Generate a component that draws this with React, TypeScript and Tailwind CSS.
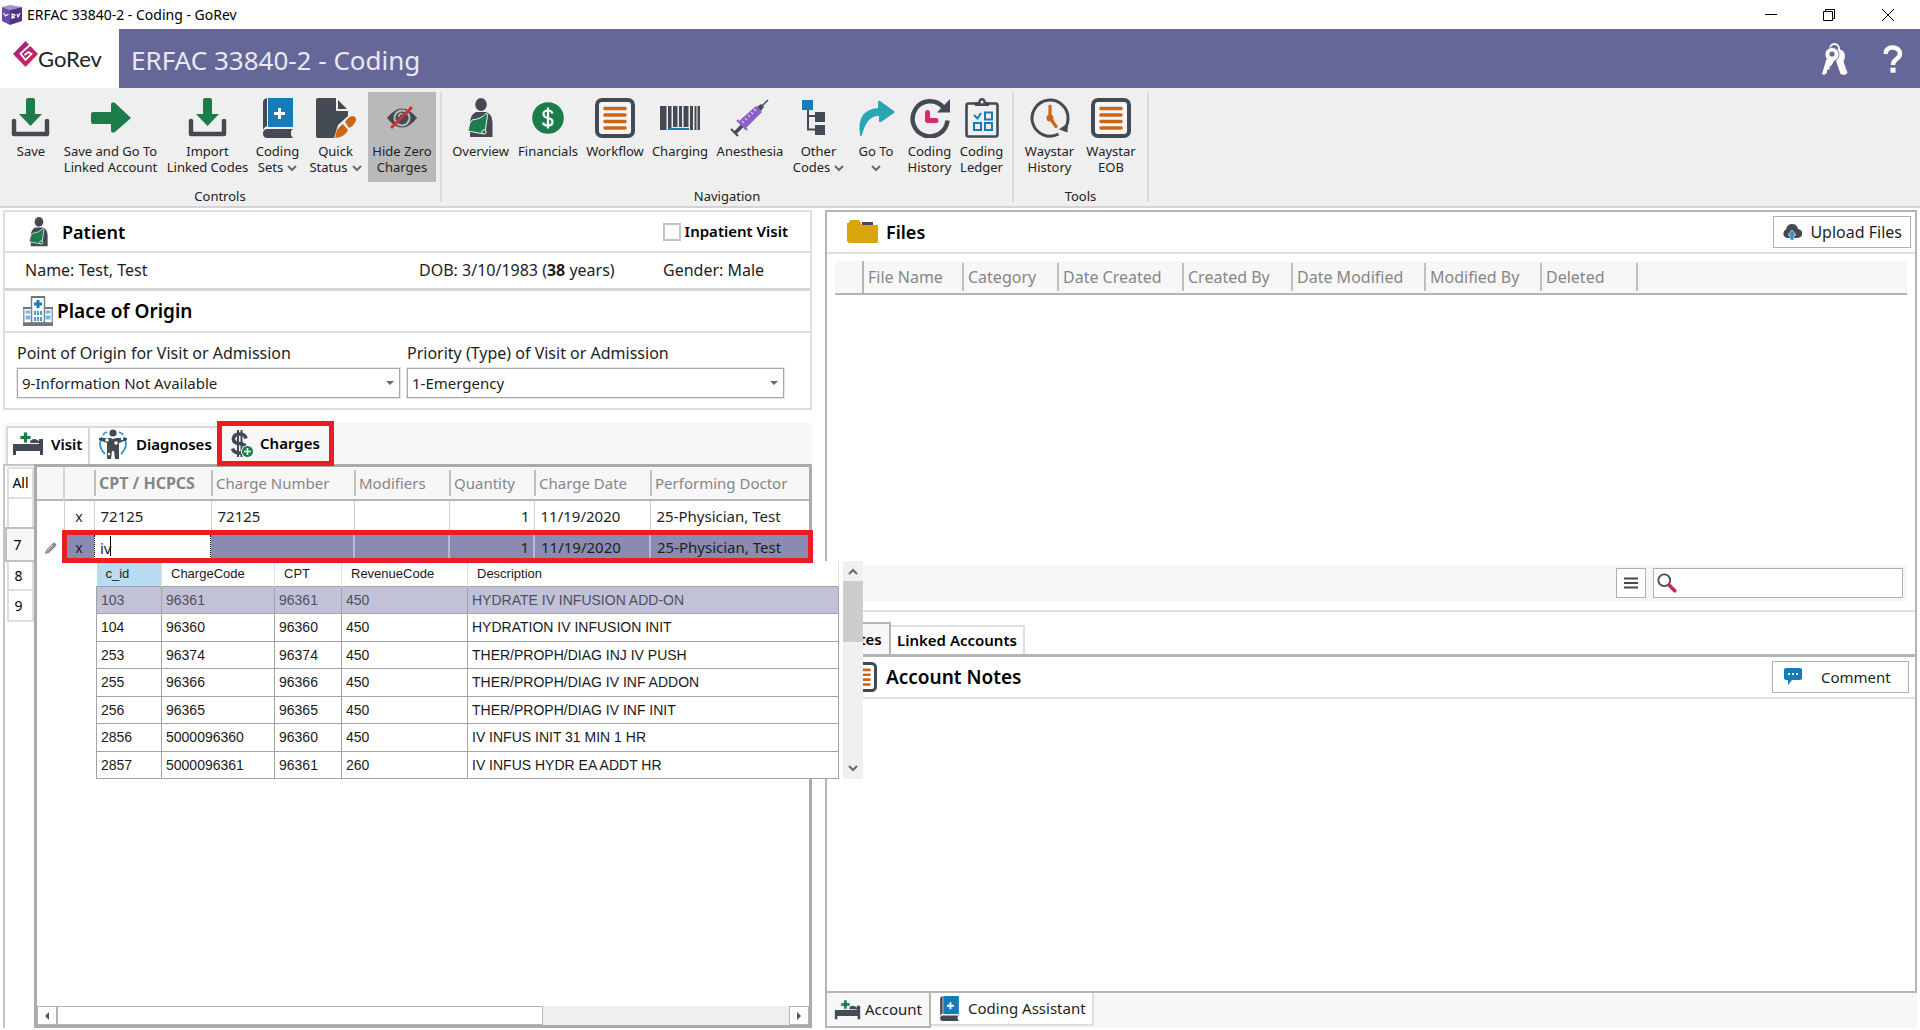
import type { ReactNode } from "react";
import clsx from "clsx";

const DARK = "#434a54";
const GREEN = "#1d7d4a";
const BLUE = "#167cb8";
const ORANGE = "#c9661a";

function DownloadIcon() {
  return (
    <svg viewBox="0 0 40 40" className="h-10 w-10" aria-hidden="true">
      <path d="M15 2a2 2 0 0 1 2-2h5a2 2 0 0 1 2 2v14h7L19.5 28 8 16h7z" fill={GREEN} />
      <path d="M3 23v13h33V23" fill="none" stroke={DARK} strokeWidth="4.5" strokeLinejoin="round" strokeLinecap="round" />
    </svg>
  );
}

function ArrowRightIcon() {
  return (
    <svg viewBox="0 0 40 40" className="h-10 w-10" aria-hidden="true">
      <path d="M2 14h18V6q1-3 4-1l16 15-16 14q-3 2-4-1v-7H2q-2 0-2-2v-8q0-2 2-2z" fill={GREEN} />
    </svg>
  );
}

function BookIcon({ className }: { className: string }) {
  return (
    <svg viewBox="0 0 40 40" className={className} aria-hidden="true">
      <path d="M9 0v28q-3 1-4 4V4q0-3 4-4z" fill={DARK} />
      <path d="M10 0h25v29H10z" fill={BLUE} />
      <path d="M20 10h3v4h4v3h-4v4h-3v-4h-4v-3h4z" fill="#fff" />
      <path d="M8 31h27l-2 2v4l2 3H8q-3-1-3-4.5T8 31z" fill={DARK} />
    </svg>
  );
}

function DocBrushIcon() {
  return (
    <svg viewBox="0 0 40 40" className="h-10 w-10" aria-hidden="true">
      <path d="M2 0h18v13h12v5l-10 9-4 13H2q-2 0-2-2V2q0-2 2-2z" fill={DARK} />
      <path d="M22 2l9 9h-9z" fill={DARK} />
      <path d="M29 24q3-5 7-6 4 0 4 4-1 5-7 8z" fill={ORANGE} />
      <path d="M27 26l5 6q-3 7-13 8 1-10 8-14z" fill={ORANGE} />
    </svg>
  );
}

function EyeOffIcon() {
  return (
    <svg viewBox="0 0 40 40" className="h-10 w-10" aria-hidden="true">
      <path d="M5 20Q20 1 35 20 20 39 5 20z" fill={DARK} />
      <circle cx="20" cy="20" r="8.5" fill="#b9b9b9" />
      <circle cx="20" cy="20" r="6.5" fill={DARK} />
      <path d="M16.5 19a4 4 0 0 1 4-3.5" fill="none" stroke="#b9b9b9" strokeWidth="1.5" />
      <path d="M9 30L30 9" stroke="#d2322b" strokeWidth="3" />
    </svg>
  );
}

function PatientIcon({ className }: { className: string }) {
  return (
    <svg viewBox="0 0 40 40" className={className} aria-hidden="true">
      <ellipse cx="20" cy="6.5" rx="5.8" ry="6.5" fill={DARK} />
      <path d="M15 14h10q6 2 6.5 10v15H9V24q1-8 6-10z" fill={DARK} />
      <path d="M25 15.500q2 0 1.500 2L24 34q-1 2-4 1.500L7 33q1-8 4-11 9-1 14-6.500z" fill={GREEN} stroke="#efefef" strokeWidth="1" />
      <circle cx="23" cy="34" r="2.2" fill={GREEN} stroke="#efefef" />
    </svg>
  );
}

function DollarCircleIcon() {
  return (
    <svg viewBox="0 0 40 40" className="h-10 w-10" aria-hidden="true">
      <circle cx="20" cy="20" r="15.8" fill={GREEN} />
      <path d="M24.5 15.5q-1-3-4.500-3-4.500 0-4.500 3.500 0 3 4.500 4t4.500 4q0 3.500-4.500 3.500t-5-3M20 9.500v21" fill="none" stroke="#fff" strokeWidth="2.2" />
    </svg>
  );
}

function ListIcon({ className }: { className: string }) {
  return (
    <svg viewBox="0 0 40 40" className={className} aria-hidden="true">
      <rect x="2" y="2" width="36" height="36" rx="5" fill="#fff" fillOpacity="0.4" stroke={DARK} strokeWidth="4" />
      <path d="M10 10.500h20M10 17h20M10 23.500h20M10 30h20" stroke={ORANGE} strokeWidth="3.6" strokeLinecap="round" />
    </svg>
  );
}

function BarcodeIcon() {
  return (
    <svg viewBox="0 0 40 40" className="h-10 w-10" aria-hidden="true">
      <path d="M0 8h6.500v24H0zM8 8h3.500v24H8zM13 8h4.500v21H13zM19 8h3v21h-3zM23.500 8h5v21h-5zM30 8h3v24h-3zM34.500 8h2v24h-2zM37.500 8H40v24h-2.500z" fill={DARK} />
      <path d="M9 31h20" stroke={BLUE} strokeWidth="2" />
    </svg>
  );
}

function SyringeIcon() {
  return (
    <svg viewBox="0 0 40 40" className="h-10 w-10" aria-hidden="true">
      <path d="M38 2l-9 9" stroke={DARK} strokeWidth="1.5" />
      <path d="M31 6l3 3-3 4-4-4z" fill={DARK} />
      <path d="M26 8l6 6-16 16-7-7z" fill="#8b5fc7" />
      <path d="M26 13l-2-2M23 16l-2-2M20 19l-2-2M17 22l-2-2M14 25l-2-2" stroke="#d9c8f0" strokeWidth="1.2" />
      <path d="M7 22l10 10" stroke="#8b5fc7" strokeWidth="2" />
      <path d="M12 28l-7 7" stroke={DARK} strokeWidth="3.5" />
      <path d="M1 31l7 7" stroke={DARK} strokeWidth="2" />
    </svg>
  );
}

function TreeIcon() {
  return (
    <svg viewBox="0 0 40 40" className="h-10 w-10" aria-hidden="true">
      <path d="M9 12v19.500h9M9 18h9" fill="none" stroke={DARK} strokeWidth="2" />
      <path d="M3 2h11v10H3z" fill={BLUE} />
      <path d="M16 14h10v10H16zM16 27h10v10H16z" fill={DARK} />
    </svg>
  );
}

function CurvedArrowIcon() {
  return (
    <svg viewBox="0 0 40 40" className="h-10 w-10" aria-hidden="true">
      <path d="M22 4q0-2 2-1l14 10q1 1 0 2L25 24q-2 1-2-1v-5q-12-1-17 19-1 2-2 0Q0 12 22 10z" fill="#2aa5b3" />
    </svg>
  );
}

function ReloadClockIcon() {
  return (
    <svg viewBox="0 0 40 40" className="h-10 w-10" aria-hidden="true">
      <path d="M33 9A17.5 17.5 0 1 0 37.5 22.5" fill="none" stroke={DARK} strokeWidth="4.5" />
      <path d="M40 1v13.5H27z" fill={DARK} />
      <path d="M17.5 14.500v8H26" fill="none" stroke="#d92b6c" strokeWidth="5" strokeLinejoin="round" strokeLinecap="round" />
    </svg>
  );
}

function LedgerIcon() {
  return (
    <svg viewBox="0 0 40 40" className="h-10 w-10" aria-hidden="true">
      <path d="M13 5.500H6.500q-2 0-2 2v29q0 2 2 2h27q2 0 2-2v-29q0-2-2-2H27" fill="none" stroke={DARK} strokeWidth="2.6" />
      <path d="M13 8V4h3q1-4 4-4t4 4h3v4z" fill={DARK} />
      <circle cx="20" cy="4" r="1.5" fill="#efefef" />
      <path d="M12 17l3.500 3.500L19 15M23 14.500h7v7h-7zM12 25h7v7h-7zM23 25h7v7h-7z" fill="none" stroke={BLUE} strokeWidth="2" />
    </svg>
  );
}

function ClockArrowIcon() {
  return (
    <svg viewBox="0 0 40 40" className="h-10 w-10" aria-hidden="true">
      <path d="M28.500 36A18 18 0 1 1 38 21q0 4-2 8" fill="none" stroke={DARK} strokeWidth="3" />
      <path d="M31 31l6-4-.5 6z" fill={DARK} stroke={DARK} strokeWidth="2" />
      <path d="M20 8v12l6 8.500" fill="none" stroke={ORANGE} strokeWidth="3.2" strokeLinecap="round" />
      <circle cx="20" cy="20" r="3.5" fill={ORANGE} />
    </svg>
  );
}

function HospitalIcon() {
  return (
    <svg viewBox="0 0 30 30" className="h-[30px] w-[30px]" aria-hidden="true">
      <path d="M8.500 1h13v26h-13z" fill="#fff" stroke="#7c828a" strokeWidth="1.500" />
      <path d="M.8 12h7.700v15H.8zM21.500 12h7.700v15h-7.700z" fill="#fff" stroke="#7c828a" strokeWidth="1.2" />
      <path d="M13.500 4h3v2.500H19v3h-2.500V12h-3V9.500H11v-3h2.500z" fill={BLUE} />
      <path d="M2.500 14.500h5v3h-5zM2.500 19.500h5v4h-5zM22.500 14.500h5v3h-5zM22.500 19.500h5v4h-5z" fill="#7cb9dc" />
      <path d="M12 15v4M15 15v4M18 15v4M12 21v4M15 21v4M18 21v4" stroke={BLUE} strokeWidth="1.5" />
      <path d="M0 26.500h30V30H0zM0 11h8v2H0zM22 11h8v2h-8zM8 0h14v2H8z" fill="#6f757d" />
    </svg>
  );
}

function BedIcon({ className }: { className: string }) {
  return (
    <svg viewBox="0 0 32 26" className={className} aria-hidden="true">
      <path d="M1 13h26V8h4v16h-3v-4H4v4H1z" fill={DARK} />
      <path d="M18 12q0-4 5-4 4 1 5 4z" fill={DARK} />
      <path d="M11.500 1h4v3.500H19v4h-3.500V12h-4V8.500H8v-4h3.500z" fill={GREEN} stroke="#fff" strokeWidth=".8" />
    </svg>
  );
}

function BodyIcon() {
  return (
    <svg viewBox="0 0 30 30" className="h-[30px] w-[30px]" aria-hidden="true">
      <path d="M4 8q-5 9 3 17M26 8q5 9-3 17M9 3q-3 1-4 3M21 3q3 1 4 3" fill="none" stroke="#2f93c9" strokeWidth="1.8" />
      <circle cx="15" cy="4" r="3.6" fill={DARK} />
      <path d="M1 9h11l3 1 3-1h11v2l-8 3v16h-4l-1-8h-2l-1 8H9V14l-8-3z" fill={DARK} />
      <circle cx="9" cy="11" r="1.8" fill="#fff" />
      <circle cx="18" cy="14" r="1.8" fill="#fff" />
      <circle cx="11" cy="25" r="1.8" fill="#fff" stroke={DARK} />
      <circle cx="24" cy="10" r="1.2" fill="#fff" />
    </svg>
  );
}

function DollarPlusIcon() {
  return (
    <svg viewBox="0 0 24 28" className="h-7 w-6" aria-hidden="true">
      <path d="M15 8.500Q14 4 8.500 4T2.500 8.500 8.500 13.500t6 5-6 4.500-7-4.500" fill="none" stroke={DARK} strokeWidth="3.6" />
      <path d="M7 0v27M10.500 0v27" stroke={DARK} strokeWidth="2" />
      <circle cx="16.500" cy="21.500" r="6" fill={GREEN} stroke="#fff" />
      <path d="M16.500 18v7M13 21.500h7" stroke="#fff" strokeWidth="1.6" />
    </svg>
  );
}

function FolderIcon() {
  return (
    <svg viewBox="0 0 32 24" className="h-6 w-8" aria-hidden="true">
      <path d="M15 2h11v3H15z" fill={DARK} />
      <path d="M3 0h9l3 5h16v18H2l-2-2V3h2z" fill="#d9a50d" />
    </svg>
  );
}

function CloudIcon() {
  return (
    <svg viewBox="0 0 20 16" className="h-4 w-5" aria-hidden="true">
      <path d="M5 14a4.500 4.500 0 0 1-1-8.500Q5 0 10 0t6 5a4.500 4.500 0 0 1-.5 9z" fill={DARK} />
      <path d="M10 6l4 5h-2v5H8v-5H6z" fill="#2f8fc8" stroke="#fff" strokeWidth=".6" />
    </svg>
  );
}

function CommentIcon() {
  return (
    <svg viewBox="0 0 20 18" className="h-[18px] w-5" aria-hidden="true">
      <path d="M3 0h14q2 0 2 2v8q0 2-2 2H9l-4 5v-5H3q-2 0-2-2V2q0-2 2-2z" fill={BLUE} />
      <path d="M5 5h2v2H5zM9 5h2v2H9zM13 5h2v2h-2z" fill="#fff" />
    </svg>
  );
}

function SearchIcon() {
  return (
    <svg viewBox="0 0 22 22" className="h-5 w-5" aria-hidden="true">
      <circle cx="8" cy="8" r="6.500" fill="none" stroke={DARK} strokeWidth="2" />
      <path d="M13.500 13.500l6 6" stroke="#c2285f" strokeWidth="4" strokeLinecap="round" />
    </svg>
  );
}

function PencilIcon() {
  return (
    <svg viewBox="0 0 12 12" className="h-3 w-3" aria-hidden="true">
      <path d="M0 12l1-4 7-7q1-1 2 0l1 1q1 1 0 2l-7 7z" fill="#8d8d8d" />
      <path d="M2 9l6-6" stroke="#d5d5d5" />
    </svg>
  );
}

function KeysIcon() {
  return (
    <svg viewBox="0 0 26 32" className="h-8 w-[26px]" aria-hidden="true">
      <circle cx="12.500" cy="5.500" r="4.500" fill="none" stroke="#fff" strokeWidth="1.8" />
      <path d="M14 7q6-2 8.500 3 1 5-1 8l4 12-3 2-4-1-4-12z" fill="#fff" />
      <path d="M22 21l2-1M23.500 26l2-1" stroke="#666799" />
      <circle cx="10" cy="11.500" r="7" fill="#fff" stroke="#666799" strokeWidth=".8" />
      <path d="M4.500 16l7.500 2-3 5-2 1 1 2-3 1v3l-3 2-2-1z" fill="#fff" />
      <circle cx="10" cy="11" r="2.6" fill="#666799" />
    </svg>
  );
}

function Caret({ className }: { className?: string }) {
  return (
    <svg viewBox="0 0 10 8" className={clsx("inline-block h-2 w-[10px]", className)} aria-hidden="true">
      <path d="M1 1l4 4 4-4" fill="none" stroke="#6a6a6a" strokeWidth="2" />
    </svg>
  );
}

function GoRevLogo() {
  return (
    <svg viewBox="0 0 25 26" className="h-[26px] w-[25px]" aria-hidden="true">
      <defs>
        <linearGradient id="rev" x1="0" y1="0" x2="1" y2="1">
          <stop offset="0" stopColor="#8e2a86" />
          <stop offset="1" stopColor="#e01f55" />
        </linearGradient>
      </defs>
      <path d="M12.500 0L25 13 12.500 26 0 13z" fill="url(#rev)" />
      <path d="M17 4l-9.500 8.500 5 6.500 6-6-3-2-4 3" fill="none" stroke="#fff" strokeWidth="1.8" />
    </svg>
  );
}

function AppIcon() {
  return (
    <svg viewBox="0 0 20 20" className="h-5 w-5" aria-hidden="true">
      <path d="M0 2l8-2 12 2-12 3z" fill="#a58fd0" />
      <path d="M0 2l8 3v15l-8-4z" fill="#6a4aa5" />
      <path d="M8 5l12-3v14L8 20z" fill="#4d3385" />
      <path d="M1.500 8l2 3 3-2M10 14V9l3 1-2 2 2 1M15 9l1 3 2-4" fill="none" stroke="#fff" strokeWidth="1.2" />
    </svg>
  );
}

interface RibbonItem {
  lines: string[];
  icon: ReactNode;
  width: string;
  caret?: boolean;
  pressed?: boolean;
}

const controls: RibbonItem[] = [
  { lines: ["Save"], icon: <DownloadIcon />, width: "w-[54px]" },
  { lines: ["Save and Go To", "Linked Account"], icon: <ArrowRightIcon />, width: "w-[105px]" },
  { lines: ["Import", "Linked Codes"], icon: <DownloadIcon />, width: "w-[89px]" },
  { lines: ["Coding", "Sets"], icon: <BookIcon className="h-10 w-10" />, width: "w-[51px]", caret: true },
  { lines: ["Quick", "Status"], icon: <DocBrushIcon />, width: "w-[65px]", caret: true },
  { lines: ["Hide Zero", "Charges"], icon: <EyeOffIcon />, width: "w-[68px]", pressed: true },
];

const navigation: RibbonItem[] = [
  { lines: ["Overview"], icon: <PatientIcon className="h-10 w-10" />, width: "w-[67px]" },
  { lines: ["Financials"], icon: <DollarCircleIcon />, width: "w-[68px]" },
  { lines: ["Workflow"], icon: <ListIcon className="h-10 w-10" />, width: "w-[66px]" },
  { lines: ["Charging"], icon: <BarcodeIcon />, width: "w-[64px]" },
  { lines: ["Anesthesia"], icon: <SyringeIcon />, width: "w-[76px]" },
  { lines: ["Other", "Codes"], icon: <TreeIcon />, width: "w-[61px]", caret: true },
  { lines: ["Go To", ""], icon: <CurvedArrowIcon />, width: "w-[54px]", caret: true },
  { lines: ["Coding", "History"], icon: <ReloadClockIcon />, width: "w-[53px]" },
  { lines: ["Coding", "Ledger"], icon: <LedgerIcon />, width: "w-[51px]" },
];

const tools: RibbonItem[] = [
  { lines: ["Waystar", "History"], icon: <ClockArrowIcon />, width: "w-[61px]" },
  { lines: ["Waystar", "EOB"], icon: <ListIcon className="h-10 w-10" />, width: "w-[62px]" },
];

function RibbonGroup({ label, items }: { label: string; items: RibbonItem[] }) {
  return (
    <div className="my-1 flex flex-col border-r-2 border-[#d9d9d9] px-[5px] first:px-1">
      <div className="flex">
        {items.map((item) => (
          <button
            key={item.lines.join(" ")}
            type="button"
            className={clsx(
              "flex h-[90px] flex-col items-center pt-[6px] text-[13px] leading-4 whitespace-nowrap",
              item.width,
              item.pressed && "bg-[#b9b9b9]"
            )}
          >
            {item.icon}
            <span className="mt-[5px] block">{item.lines[0]}</span>
            {item.lines.length > 1 && (
              <span className="block">
                {item.lines[1]}
                {item.caret && <Caret className={item.lines[1] ? "ml-1" : ""} />}
              </span>
            )}
          </button>
        ))}
      </div>
      <div className="pt-1 text-center text-[13px] leading-5">{label}</div>
    </div>
  );
}

function Ribbon() {
  return (
    <div className="flex h-[120px] border-b-2 border-[#d4d4d4] bg-[#efefef] text-[#222]">
      <RibbonGroup label="Controls" items={controls} />
      <RibbonGroup label="Navigation" items={navigation} />
      <RibbonGroup label="Tools" items={tools} />
    </div>
  );
}

function TitleBar() {
  return (
    <header>
      <div className="flex h-[29px] items-center bg-white pl-[2px] text-black">
        <AppIcon />
        <span className="ml-[5px] text-sm">ERFAC 33840-2 - Coding - GoRev</span>
        <div className="ml-auto flex pr-[26px]">
          <button type="button" aria-label="Minimize" className="mr-[46px]">
            <svg viewBox="0 0 12 12" className="h-3 w-3">
              <path d="M0 5.500h12" stroke="#000" />
            </svg>
          </button>
          <button type="button" aria-label="Restore" className="mr-[47px]">
            <svg viewBox="0 0 12 12" className="h-3 w-3" fill="none" stroke="#000">
              <path d="M.5 2.500h9v9h-9zM2.500 2.500v-2h9v9h-2" />
            </svg>
          </button>
          <button type="button" aria-label="Close">
            <svg viewBox="0 0 12 12" className="h-3 w-3" stroke="#000">
              <path d="M0 0l12 12M12 0L0 12" />
            </svg>
          </button>
        </div>
      </div>
      <div className="flex h-[59px] items-center bg-[#666799] text-white">
        <div className="flex h-full w-[119px] bg-white pt-3 pl-[13px] text-[#222]">
          <GoRevLogo />
          <span className="pt-2 font-[Lato] text-[22px] leading-5">GoRev</span>
        </div>
        <h1 className="ml-3 pt-[3px] text-[26px] text-[#e9e9f2]">ERFAC 33840-2 - Coding</h1>
        <button type="button" aria-label="Keys" className="mr-[35px] ml-auto">
          <KeysIcon />
        </button>
        <button type="button" aria-label="Help" className="mr-[17px]">
          <svg viewBox="0 0 20 28" className="h-7 w-5" fill="none" stroke="#fff" strokeWidth="4.500">
            <path d="M2.500 9Q3 2.500 9.500 2.500T17 8.500q0 3-3.500 5.500T10 20" />
            <path d="M7.500 25.200h5" strokeWidth="5" />
          </svg>
        </button>
      </div>
    </header>
  );
}

function SelectField({ id, label, value, className }: { id: string; label: string; value: string; className: string }) {
  return (
    <div className={className}>
      <label htmlFor={id} className="block text-base leading-5">
        {label}
      </label>
      <div className="relative mt-[5px]">
        <select
          id={id}
          className="h-[30px] w-full appearance-none border border-[#a8a8a8] bg-white pl-1 text-[15px] outline outline-[#e6e6e6]"
        >
          <option>{value}</option>
        </select>
        <span className="pointer-events-none absolute top-[13px] right-[6px] border-x-4 border-t-4 border-x-transparent border-t-[#6a6a6a]" />
      </div>
    </div>
  );
}

function PatientPanel() {
  return (
    <section className="mr-[13px] ml-[3px] border-2 border-[#dedede] bg-white text-[#1e1e1e]">
      <div className="flex h-[41px] items-center border-b-2 border-[#dedede] pl-[19px]">
        <PatientIcon className="h-[30px] w-[30px]" />
        <h2 className="ml-2 text-lg font-semibold text-black">Patient</h2>
        <label className="mr-[22px] ml-auto flex items-center gap-1 font-semibold text-black">
          <input type="checkbox" className="h-[18px] w-[18px] appearance-none border-2 border-[#c4c4c4] bg-white" />
          <span className="text-[15px]">Inpatient Visit</span>
        </label>
      </div>
      <div className="flex h-[38px] items-center border-b-[3px] border-[#d4d4d4] pb-[2px] pl-5 text-base">
        <span className="flex-1">Name: Test, Test</span>
        <span className="w-[244px]">
          DOB: 3/10/1983 (<b>38</b> years)
        </span>
        <span className="w-[147px]">Gender: Male</span>
      </div>
      <div className="flex h-[42px] items-center border-b-2 border-[#dedede] pl-[18px]">
        <HospitalIcon />
        <h2 className="ml-1 text-[19px] font-semibold text-black">Place of Origin</h2>
      </div>
      <div className="flex gap-[7px] pt-[10px] pr-[26px] pb-[10px] pl-3">
        <SelectField
          id="origin"
          label="Point of Origin for Visit or Admission"
          value="9-Information Not Available"
          className="w-[383px]"
        />
        <SelectField
          id="priority"
          label="Priority (Type) of Visit or Admission"
          value="1-Emergency"
          className="flex-1"
        />
      </div>
    </section>
  );
}

const codes = [
  ["103", "96361", "96361", "450", "HYDRATE IV INFUSION ADD-ON"],
  ["104", "96360", "96360", "450", "HYDRATION IV INFUSION INIT"],
  ["253", "96374", "96374", "450", "THER/PROPH/DIAG INJ IV PUSH"],
  ["255", "96366", "96366", "450", "THER/PROPH/DIAG IV INF ADDON"],
  ["256", "96365", "96365", "450", "THER/PROPH/DIAG IV INF INIT"],
  ["2856", "5000096360", "96360", "450", "IV INFUS INIT 31 MIN 1 HR"],
  ["2857", "5000096361", "96361", "260", "IV INFUS HYDR EA ADDT HR"],
];

function CodeLookup() {
  return (
    <div className="absolute top-[94px] left-[59px] z-20 flex h-[218px] w-[767px] bg-white font-['Liberation_Sans',sans-serif] text-[#1a1a1a]">
      <table className="h-[218px] w-[743px] table-fixed border-collapse text-left">
        <colgroup>
          <col className="w-[65px]" />
          <col className="w-[113px]" />
          <col className="w-[67px]" />
          <col className="w-[126px]" />
          <col />
        </colgroup>
        <thead>
          <tr className="h-[25px]">
            {["c_id", "ChargeCode", "CPT", "RevenueCode", "Description"].map((name, i) => (
              <th
                key={name}
                className={clsx("border-r border-[#e2e2e2] p-0 pl-[9px] text-[13px] font-normal", i === 0 && "bg-[#b9dcf3]")}
              >
                {name}
              </th>
            ))}
          </tr>
        </thead>
        <tbody>
          {codes.map((row, i) => (
            <tr key={row[0]} className={clsx(i === 0 && "bg-[#c1c1d8] text-[#505058]")}>
              {row.map((cell, j) => (
                <td key={j} className="border border-[#a3a3a3] p-0 pl-1 text-sm leading-4">
                  {cell}
                </td>
              ))}
            </tr>
          ))}
        </tbody>
      </table>
      <div className="ml-auto flex w-5 flex-col items-center bg-[#f0f0f0]">
        <Caret className="my-[6px] rotate-180" />
        <div className="h-[61px] w-full bg-[#cdcdcd]" />
        <Caret className="mt-auto mb-[6px]" />
      </div>
    </div>
  );
}

const chargeColumns = [
  { name: "CPT / HCPCS", bold: true },
  { name: "Charge Number" },
  { name: "Modifiers" },
  { name: "Quantity" },
  { name: "Charge Date" },
  { name: "Performing Doctor" },
];

function ChargeGrid() {
  return (
    <div className="relative flex min-w-0 flex-1 flex-col border-[3px] border-[#ababab] bg-white">
      <table className="w-full table-fixed border-collapse text-left text-[15px] text-[#1e1e1e]">
        <colgroup>
          <col className="w-[27px]" />
          <col className="w-[30px]" />
          <col className="w-[117px]" />
          <col className="w-[143px]" />
          <col className="w-[95px]" />
          <col className="w-[85px]" />
          <col className="w-[116px]" />
          <col />
        </colgroup>
        <thead>
          <tr className="h-[33px] border-b-2 border-[#b5b5b5] bg-[#f7f7f7] text-[#868686]">
            <th className="border-r-2 border-[#d4d4d4] p-0" aria-label="Edit" />
            <th className="p-0" aria-label="Remove" />
            {chargeColumns.map((col) => (
              <th key={col.name} className="p-0 font-normal">
                <span
                  className={clsx("block border-l-2 border-[#c0c0c0] pl-[3px] leading-[26px]", col.bold && "text-base font-bold")}
                >
                  {col.name}
                </span>
              </th>
            ))}
          </tr>
        </thead>
        <tbody>
          <tr className="h-[32px]">
            <td className="p-0" />
            <td className="border-x border-[#cfcfcf] p-0 text-center text-sm">x</td>
            <td className="border-r border-[#cfcfcf] p-0 pl-[6px]">72125</td>
            <td className="border-r border-[#cfcfcf] p-0 pl-[6px]">72125</td>
            <td className="border-r border-[#cfcfcf] p-0" />
            <td className="border-r border-[#cfcfcf] p-0 pr-1 text-right">1</td>
            <td className="border-r border-[#cfcfcf] p-0 pl-[6px]">11/19/2020</td>
            <td className="p-0 pl-[6px]">25-Physician, Test</td>
          </tr>
          <tr className="h-[31px]">
            <td className="p-0">
              <span className="flex justify-center">
                <PencilIcon />
              </span>
            </td>
            <td className="bg-[#8a8bb2] p-0 text-center text-sm">x</td>
            <td className="bg-white p-0">
              <input
                aria-label="CPT / HCPCS"
                defaultValue="iv"
                className="block h-[26px] w-full border-x border-dotted border-black bg-white pl-[5px] outline-none"
              />
            </td>
            <td className="border-r-2 border-[#b9b9d2] bg-[#8a8bb2] p-0" />
            <td className="border-r-2 border-[#b9b9d2] bg-[#8a8bb2] p-0" />
            <td className="border-r-2 border-[#b9b9d2] bg-[#8a8bb2] p-0 pr-1 text-right">1</td>
            <td className="border-r-2 border-[#b9b9d2] bg-[#8a8bb2] p-0 pl-[6px]">11/19/2020</td>
            <td className="bg-[#8a8bb2] p-0 pl-[6px]">25-Physician, Test</td>
          </tr>
        </tbody>
      </table>
      <div className="pointer-events-none absolute top-[63px] -right-1 left-[25px] z-30 h-[33px] border-[5px] border-[#ec1c24]" />
      <span className="absolute top-[69px] left-[73px] h-5 w-px bg-black" />
      <CodeLookup />
      <div className="mt-auto flex h-[19px] bg-[#efefef]">
        <button type="button" aria-label="Scroll left" className="flex w-5 items-center justify-center border border-[#b5b5b5] bg-white">
          <span className="border-y-4 border-r-4 border-y-transparent border-r-[#555]" />
        </button>
        <div className="w-[63%] border border-[#b5b5b5] bg-white" />
        <button type="button" aria-label="Scroll right" className="ml-auto flex w-5 items-center justify-center border border-[#b5b5b5] bg-white">
          <span className="border-y-4 border-l-4 border-y-transparent border-l-[#555]" />
        </button>
      </div>
    </div>
  );
}

function ChargesArea() {
  return (
    <section className="mr-[13px] ml-[3px] flex flex-1 flex-col pt-[13px] text-black">
      <div className="flex h-[41px] items-end bg-[#f7f7f7] pl-[3px] text-[15px] font-semibold">
        <button type="button" className="flex h-[38px] w-[84px] items-center border-2 border-b-0 border-[#d9d9d9] bg-white pb-1 pl-1">
          <BedIcon className="h-[26px] w-8" />
          <span className="ml-[7px]">Visit</span>
        </button>
        <button type="button" className="flex h-[38px] w-[127px] items-center border-t-2 border-[#d9d9d9] bg-white pb-1 pl-2">
          <BodyIcon />
          <span className="ml-2">Diagnoses</span>
        </button>
        <button
          type="button"
          className="relative z-10 -mb-[2px] flex h-[45px] w-[117px] items-center border-[5px] border-[#ec1c24] bg-[#f7f7f7] pl-[9px]"
        >
          <DollarPlusIcon />
          <span className="ml-[5px]">Charges</span>
        </button>
      </div>
      <div className="mb-[2px] flex flex-1 border-l-2 border-[#c4c4c4]">
        <div className="w-[29px] border-t-2 border-[#c4c4c4] pt-px text-center text-sm">
          <button type="button" className="ml-[2px] block h-8 w-[27px] border-2 border-[#dedede] bg-white">
            All
          </button>
          <button type="button" aria-label="Blank" className="ml-[2px] block h-7 w-[27px] border-x-2 border-[#dedede] bg-white" />
          <button type="button" className="block h-[35px] w-[29px] border-2 border-r-0 border-[#c0c0c0] bg-[#f7f7f7] pr-[6px]">
            7
          </button>
          <button type="button" className="ml-[2px] block h-[29px] w-[27px] border-2 border-t-0 border-[#dedede] bg-white pr-1">
            8
          </button>
          <button type="button" className="ml-[2px] block h-[31px] w-[27px] border-2 border-t-0 border-[#dedede] bg-white pr-1">
            9
          </button>
        </div>
        <ChargeGrid />
      </div>
    </section>
  );
}

const fileColumns = [
  { name: "File Name", width: "w-[101px]" },
  { name: "Category", width: "w-[95px]" },
  { name: "Date Created", width: "w-[125px]" },
  { name: "Created By", width: "w-[109px]" },
  { name: "Date Modified", width: "w-[133px]" },
  { name: "Modified By", width: "w-[116px]" },
  { name: "Deleted", width: "w-[96px]" },
];

function FilesPanel() {
  return (
    <section className="flex h-[400px] flex-col border-b-2 border-[#dedede]">
      <div className="flex h-[42px] items-center border-b-2 border-[#dedede] pr-1 pl-5">
        <FolderIcon />
        <h2 className="ml-[7px] text-lg font-semibold text-black">Files</h2>
        <button type="button" className="ml-auto flex h-8 items-center gap-2 border border-[#b0b0b0] bg-white px-2 text-base">
          <CloudIcon />
          Upload Files
        </button>
      </div>
      <div className="px-2 pt-[7px]">
        <table className="w-full table-fixed border-collapse text-left text-base">
          <thead>
            <tr className="h-[33px] border-b-2 border-[#b5b5b5] bg-[#f7f7f7] text-[#868686]">
              <th className="w-7 border-r-2 border-[#b5b5b5] p-0" aria-label="Row" />
              {fileColumns.map((col) => (
                <th key={col.name} className={clsx("p-0 font-normal", col.width)}>
                  <span className="block border-r-2 border-[#c0c0c0] pl-1 leading-7">{col.name}</span>
                </th>
              ))}
              <th className="p-0" aria-label="Filler" />
            </tr>
          </thead>
        </table>
      </div>
      <div className="mx-2 mt-auto mb-[9px] flex h-9 items-center justify-end gap-[7px] bg-[#f7f7f7] pr-1">
        <button type="button" aria-label="Menu" className="flex h-[30px] w-[30px] items-center justify-center border border-[#b0b0b0] bg-white">
          <svg viewBox="0 0 14 12" className="h-3 w-[14px]" stroke={DARK} strokeWidth="2">
            <path d="M0 1.500h14M0 6h14M0 10.500h14" />
          </svg>
        </button>
        <label className="flex h-[30px] w-[250px] items-center border border-[#b0b0b0] bg-white pl-[3px]">
          <SearchIcon />
          <input type="search" aria-label="Search files" className="min-w-0 flex-1 outline-none" />
        </label>
      </div>
    </section>
  );
}

function NotesPanel() {
  return (
    <section className="flex flex-1 flex-col text-[15px] text-black">
      <div className="flex h-[45px] items-end border-b-[3px] border-[#b5b5b5] font-semibold">
        <button type="button" className="h-[32px] w-[64px] border-2 border-b-0 border-[#b5b5b5] bg-[#f7f7f7] pl-[2px]">
          Notes
        </button>
        <button type="button" className="h-[29px] border-2 border-b-0 border-l-0 border-[#dedede] bg-white px-[6px]">
          Linked Accounts
        </button>
      </div>
      <div className="flex h-[42px] items-center border-b-2 border-[#dedede] pr-[6px] pl-5">
        <ListIcon className="h-[30px] w-[30px]" />
        <h2 className="ml-[9px] text-[19px] font-semibold">Account Notes</h2>
        <button type="button" className="ml-auto flex h-8 w-[137px] items-center border border-[#b0b0b0] bg-white pl-[10px] text-[#1e1e1e]">
          <CommentIcon />
          <span className="ml-[18px]">Comment</span>
        </button>
      </div>
    </section>
  );
}

export default function App() {
  return (
    <div className="flex min-h-screen flex-col bg-white font-['Noto_Sans',sans-serif]">
      <TitleBar />
      <Ribbon />
      <main className="grid flex-1 grid-cols-[825fr_1095fr] pt-[2px]">
        <div className="flex min-w-0 flex-col">
          <PatientPanel />
          <ChargesArea />
        </div>
        <div className="flex min-w-0 flex-col pr-[3px] text-[#1e1e1e]">
          <div className="flex flex-1 flex-col border-2 border-[#b5b5b5]">
            <FilesPanel />
            <NotesPanel />
          </div>
          <div className="mb-[2px] flex h-[35px] items-start bg-[#f7f7f7] text-[15px]">
            <button type="button" className="flex h-[35px] items-center border-2 border-t-0 border-[#b5b5b5] bg-[#f7f7f7] px-[7px]">
              <BedIcon className="h-[22px] w-[27px]" />
              <span className="ml-1">Account</span>
            </button>
            <button type="button" className="flex h-[33px] items-center border-r-2 border-b-2 border-[#dedede] bg-white px-[6px]">
              <BookIcon className="h-[25px] w-[25px]" />
              <span className="ml-[6px]">Coding Assistant</span>
            </button>
          </div>
        </div>
      </main>
    </div>
  );
}
